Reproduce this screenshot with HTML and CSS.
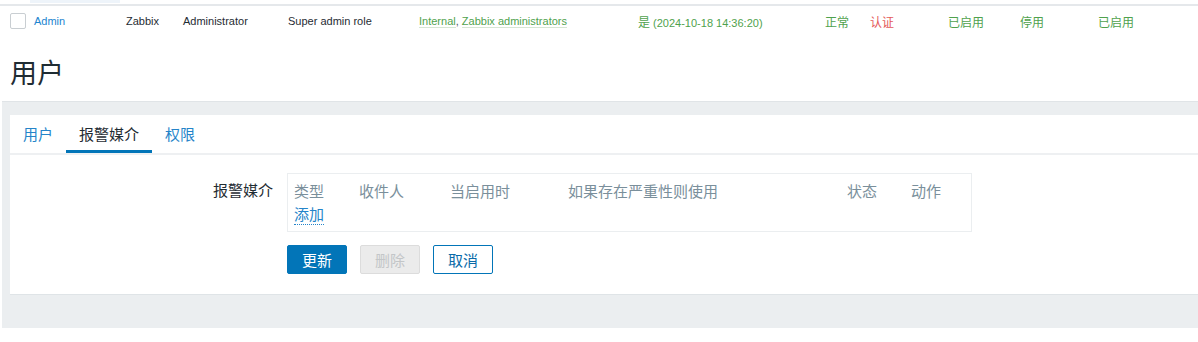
FILE: index.html
```html
<!DOCTYPE html>
<html>
<head lang="zh">
    <meta charset="UTF-8">
    <title>用户</title>
<link rel="stylesheet" href="styles.css">
</head>
<body>
    <div class="list-head"><div class="list-head-sel"></div></div>
    <div class="user-row">
      <span class="cell"><span class="checkbox"></span></span>
      <span class="cell"><a class="link">Admin</a></span>
      <span class="cell">Zabbix</span>
      <span class="cell">Administrator</span>
      <span class="cell">Super admin role</span>
      <span class="cell green"><span class="u">Internal</span><span class="comma">,</span> <span class="u">Zabbix administrators</span></span>
      <span class="cell green"><span class="cjk">是</span> (2024-10-18 14:36:20)</span>
      <span class="cell green cjk">正常</span>
      <span class="cell red cjk">认证</span>
      <span class="cell green cjk">已启用</span>
      <span class="cell green cjk">停用</span>
      <span class="cell green cjk">已启用</span>
    </div>

    <h1 class="page-title">用户</h1>

    <div class="wrapper">
      <div class="panel">
        <ul class="tabs">
          <li><a>用户</a></li>
          <li class="active"><a>报警媒介</a></li>
          <li><a>权限</a></li>
        </ul>
        <div class="tab-body">
          <div class="form-row">
            <label class="form-label">报警媒介</label>
            <div class="media-box">
              <div class="media-head">
                <span>类型</span>
                <span>收件人</span>
                <span>当启用时</span>
                <span>如果存在严重性则使用</span>
                <span>状态</span>
                <span>动作</span>
              </div>
              <div class="media-add"><a class="add-link">添加</a></div>
            </div>
          </div>
          <div class="form-buttons">
            <button class="btn btn-main">更新</button>
            <button class="btn btn-disabled">删除</button>
            <button class="btn btn-alt">取消</button>
          </div>
        </div>
      </div>
    </div>
</body>
</html>
```

FILE: styles.css
```css
body, html {
    margin: 0;
    padding: 0;
    background-color: white;
    font-family: "Noto Sans CJK SC", "Liberation Sans", sans-serif;
    color: #1f2c33;
}

.list-head {
    height: 4px;
}

.list-head-sel {
    margin-left: 30px;
    width: 90px;
    height: 3px;
    background-color: #eef4fa;
}

.user-row {
    display: grid;
    grid-template-columns: 24px 92px 57px 105px 131px 219px 187px 45px 78px 72px 78px 1fr;
    align-items: center;
    height: 26px;
    padding: 2px 0 0 10px;
    border-top: 2px solid #e5e8eb;
    font-family: "Liberation Sans", "Noto Sans CJK SC", sans-serif;
    font-size: 11px;
    color: #1f2c33;
}

.cell {
    white-space: nowrap;
}

.cjk {
    font-family: "Noto Sans CJK SC", sans-serif;
    font-size: 12px;
}

.checkbox {
    display: block;
    width: 14px;
    height: 14px;
    border: 1px solid #c9ced2;
    border-radius: 2px;
}

.link {
    color: #1c84cf;
}

.green {
    color: #4fa24d;
}

.red {
    color: #e45959;
}

.u {
    border-bottom: 1px solid #d6e6d4;
}

.comma {
    color: #4f5a60;
}

.page-title {
    margin: 0;
    padding: 20px 10px 11px;
    font-size: 27px;
    line-height: 36px;
    font-weight: normal;
    color: #1f2c33;
}

.wrapper {
    margin-left: 2px;
    padding: 13px 0 33px 8px;
    background-color: #ebeef0;
    border-top: 1px solid #e0e4e7;
}

.panel {
    background-color: white;
    border-bottom: 1px solid #dfe4e7;
}

.tabs {
    display: flex;
    margin: 0;
    padding: 0;
    list-style: none;
    border-bottom: 2px solid #eef0f2;
}

.tabs li a {
    display: block;
    padding: 2px 13px 0;
    line-height: 33px;
    font-size: 15px;
    color: #2584c9;
    border-bottom: 3px solid transparent;
}

.tabs li.active a {
    color: #1f2c33;
    border-bottom-color: #0275b8;
}

.tab-body {
    padding: 18px 0 20px;
}

.form-row {
    display: grid;
    grid-template-columns: 263px 685px;
    column-gap: 14px;
}

.form-label {
    text-align: right;
    font-size: 15px;
    line-height: 23px;
    padding-top: 5px;
    color: #1f2c33;
}

.media-box {
    border: 1px solid #ebeef0;
    padding: 5px 0 6px 6px;
    font-size: 15px;
    line-height: 23px;
}

.media-head {
    display: grid;
    grid-template-columns: 65px 91px 118px 279px 64px 1fr;
    color: #7a8f9b;
}

.add-link {
    color: #2584c9;
    border-bottom: 1px dotted #2584c9;
}

.form-buttons {
    display: flex;
    gap: 13px;
    margin-top: 13px;
    padding-left: 277px;
}

.btn {
    width: 60px;
    height: 29px;
    padding: 0;
    font-family: "Noto Sans CJK SC", sans-serif;
    font-size: 15px;
    border-radius: 2px;
    border: 1px solid transparent;
}

.btn-main {
    background-color: #0275b8;
    border-color: #0275b8;
    color: white;
}

.btn-disabled {
    background-color: #ebebeb;
    border-color: #dcdcdc;
    color: #c3c6c8;
}

.btn-alt {
    background-color: white;
    border-color: #0275b8;
    color: #0a6aa8;
}
```
